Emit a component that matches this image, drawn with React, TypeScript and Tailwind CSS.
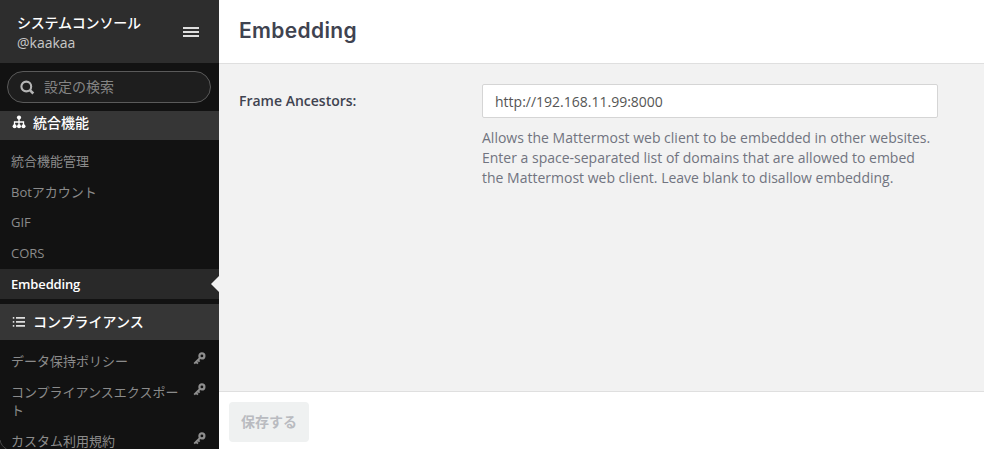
import type { ReactNode } from 'react';

function KeyIcon() {
  return (
    <svg className="mt-[-1px] h-[13px] w-[13px] shrink-0" viewBox="0 0 13 13" fill="none" stroke="#8f8f8f">
      <circle cx="8.9" cy="3.9" r="2.5" strokeWidth="2.2" />
      <path d="M7.2 5.7 1.2 11.6M3 9.8l1.9 1.9M4.9 7.9l1.7 1.7" strokeWidth="1.9" />
    </svg>
  );
}

function SitemapIcon() {
  return (
    <svg className="-mt-[2px] h-[14px] w-[14px]" viewBox="0 0 14 14" fill="white">
      <circle cx="7" cy="2.6" r="2.1" />
      <circle cx="2.6" cy="11.2" r="2" />
      <circle cx="7" cy="11.2" r="2" />
      <circle cx="11.5" cy="11.2" r="2" />
      <path d="M7 4v6M2.5 10V7h9v3" fill="none" stroke="white" strokeWidth="1.3" />
    </svg>
  );
}

function ListIcon() {
  return (
    <svg className="h-[12px] w-[14px]" viewBox="0 0 14 12" fill="#dedede">
      <path d="M0.8 1h1.5v1.7H.8zM.8 5h1.5v1.7H.8zM.8 9h1.5v1.7H.8zM4 1H13v1.7H4zM4 5H13v1.7H4zM4 9H13v1.7H4z" />
    </svg>
  );
}

function Item({ children, licensed, active, latin }: { children: ReactNode; licensed?: boolean; active?: boolean; latin?: boolean }) {
  return (
    <li
      className={
        active
          ? 'relative mb-px flex bg-[#292929] py-[6px] pl-[11px] font-semibold tracking-[-0.15px] text-white'
          : latin
            ? 'mb-px flex py-[6px] pl-[11px] pr-[13px] text-[#8b8b8b]'
            : 'mb-px flex pb-[5px] pt-[7px] pl-[11px] pr-[13px] text-[#8b8b8b]'
      }
    >
      <span className="mr-auto w-[169px]">{children}</span>
      {licensed && <span className="pt-[1px]"><KeyIcon /></span>}
      {active && (
        <svg className="absolute right-0 top-[7px] h-4 w-[8px]" viewBox="0 0 8 16">
          <path d="M8 0 0 8l8 8z" fill="#f2f2f2" />
        </svg>
      )}
    </li>
  );
}

export default function App() {
  return (
    <div className="relative flex h-[449px] w-[984px] overflow-hidden bg-[#f2f2f2] font-['Open_Sans','Noto_Sans_CJK_JP',sans-serif] text-sm text-[#3f4350]">
      <aside className="flex w-[219px] shrink-0 flex-col overflow-hidden bg-[#121212]">
        <header className="flex h-[63px] shrink-0 items-center justify-between bg-[#2d2d2d] pl-[17px] pr-[20px]">
          <div className="pt-[2px] leading-5">
            <div className="whitespace-nowrap font-medium tracking-[-0.2px] text-white">システムコンソール</div>
            <div className="text-[#c8c8c8]">@kaakaa</div>
          </div>
          <svg className="h-[10px] w-4" viewBox="0 0 16 10" fill="#dedede">
            <path d="M0 0h16v2H0zM0 4h16v2H0zM0 8h16v2H0z" />
          </svg>
        </header>
        <div className="mx-[7px] mr-2 mt-2 flex h-8 shrink-0 items-center rounded-full border border-[#5a5a5a] bg-[#1e1e1e] pl-3 text-[#858585]">
          <svg className="mr-[9px] h-[15px] w-[15px]" viewBox="0 0 15 15" fill="none" stroke="#b5b5b5">
            <circle cx="6.3" cy="6.5" r="4.9" strokeWidth="2.1" />
            <path d="m9.9 10.1 3.4 3.4" strokeWidth="2.6" />
          </svg>
          設定の検索
        </div>
        <div className="mt-2 flex h-[29px] shrink-0 items-center gap-[7px] bg-[#363636] pb-[6px] pl-3 font-medium text-white">
          <SitemapIcon />統合機能
        </div>
        <ul className="mt-[5px] shrink-0 text-[13px] leading-[18px]">
          <Item>統合機能管理</Item>
          <Item>Botアカウント</Item>
          <Item latin>GIF</Item>
          <Item latin>CORS</Item>
          <Item active>Embedding</Item>
        </ul>
        <div className="mt-1 flex h-9 shrink-0 items-center gap-[7px] bg-[#363636] pl-3 font-medium text-white">
          <ListIcon />コンプライアンス
        </div>
        <ul className="mt-[5px] shrink-0 text-[13px] leading-[18px]">
          <Item licensed>データ保持ポリシー</Item>
          <Item licensed>コンプライアンスエクスポート</Item>
          <Item licensed>カスタム利用規約</Item>
        </ul>
      </aside>
      <main className="flex min-w-0 flex-1 flex-col">
        <header className="flex h-16 shrink-0 items-center border-b border-[#dfdfdf] bg-white pb-[2px] pl-5">
          <h1 className="font-['Inter',sans-serif] text-[21px] font-semibold tracking-[0.35px]">Embedding</h1>
        </header>
        <section className="flex flex-1 pl-5 pt-5">
          <label className="w-[243px] pt-[7px] font-semibold leading-5">Frame Ancestors:</label>
          <div className="w-[456px]">
            <input
              className="block h-[34px] w-full rounded-[2px] border border-[#d5d5d5] bg-white px-3 text-[#555] outline-none"
              defaultValue="http://192.168.11.99:8000"
            />
            <p className="mt-[10px] whitespace-nowrap leading-5 text-[#717480]">
              Allows the Mattermost web client to be embedded in other websites.<br />
              Enter a space-separated list of domains that are allowed to embed<br />
              the Mattermost web client. Leave blank to disallow embedding.
            </p>
          </div>
        </section>
        <footer className="h-[58px] shrink-0 border-t border-[#dfdfdf] bg-white pl-[10px] pt-[10px]">
          <button className="h-10 w-20 rounded-[4px] bg-[#eff1f1] font-semibold text-[#b9bbc0]">保存する</button>
        </footer>
      </main>
      <svg className="absolute bottom-0 left-0 h-[9px] w-[7px]" viewBox="0 0 7 9" fill="none">
        <path d="M0 0q1 6 6.5 9" stroke="#484848" />
      </svg>
    </div>
  );
}
